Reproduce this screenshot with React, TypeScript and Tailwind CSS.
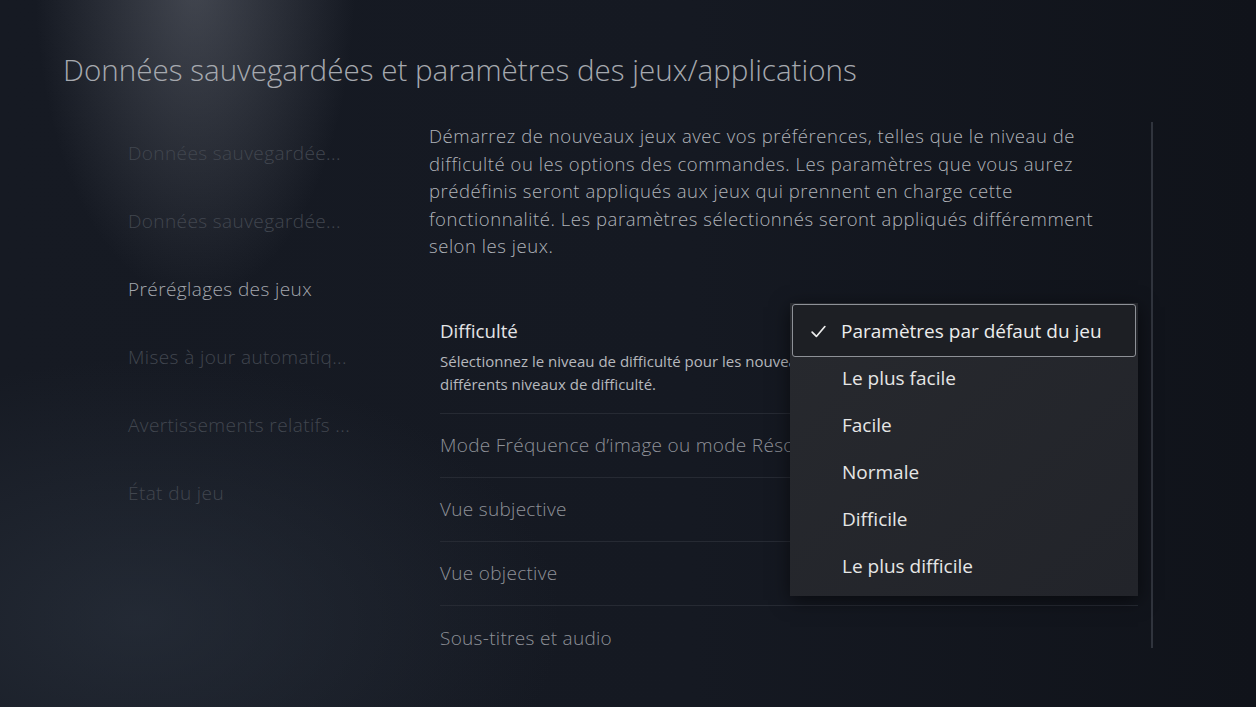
import React from 'react';

const navItems = [
  { label: 'Données sauvegardée...', active: false },
  { label: 'Données sauvegardée...', active: false },
  { label: 'Préréglages des jeux', active: true },
  { label: 'Mises à jour automatiq...', active: false },
  { label: 'Avertissements relatifs ...', active: false },
  { label: 'État du jeu', active: false },
];

const settingRows = [
  'Mode Fréquence d’image ou mode Résolution',
  'Vue subjective',
  'Vue objective',
  'Sous-titres et audio',
];

const options = ['Le plus facile', 'Facile', 'Normale', 'Difficile', 'Le plus difficile'];

const CheckIcon: React.FC = () => (
  <svg className="h-[17px] w-[17px]" viewBox="0 0 24 24" fill="none" stroke="currentColor" strokeWidth={2.4} strokeLinecap="round" strokeLinejoin="round">
    <path d="M3 13l6 6L21 5" />
  </svg>
);

const DifficultyDropdown: React.FC = () => (
  <div className="absolute left-[350px] top-[3px] w-[348px] h-[293px] bg-[#25272c] bg-gradient-to-br from-[#27292e] to-[#22242a] shadow-[0_4px_18px_rgba(0,0,0,0.55)] p-[2px] pt-px">
    {/* selected option */}
    <div className="flex items-center h-[53px] pt-[2px] rounded-[3px] border-[1.5px] border-[#8e9197] bg-[#1d1f24] text-[#ececec]">
      <span className="w-[48px] flex justify-end pr-[14px]">
        <CheckIcon />
      </span>
      <span className="text-[19px]">Paramètres par défaut du jeu</span>
    </div>
    <div className="-mt-[2px]">
      {options.map((o) => (
        <div key={o} className="flex items-center h-[47px] pl-[50px] text-[19px] text-[#e6e6e6]">
          {o}
        </div>
      ))}
    </div>
  </div>
);

const App: React.FC = () => {
  return (
    <div
      className="relative h-[707px] w-full overflow-hidden bg-[#141821] bg-[radial-gradient(ellipse_160px_320px_at_195px_-20px,rgba(120,124,134,0.45),transparent),radial-gradient(ellipse_420px_260px_at_140px_620px,rgba(44,52,64,0.6),transparent),linear-gradient(90deg,#161a23_0%,#151922_55%,#10131a_100%)]"
      style={{ fontFamily: '"Open Sans", "Noto Sans", sans-serif' }}
    >
      <div className="pt-[50px] pl-[63px]">
        <h1 className="h-[40px] leading-[40px] text-[29.6px] font-light text-[#a6a9af]">
          Données sauvegardées et paramètres des jeux/applications
        </h1>
      </div>

      <div className="flex mt-[29px]">
        {/* left navigation */}
        <div className="w-[429px] pl-[128px] shrink-0">
          {navItems.map((item, i) => (
            <div
              key={i}
              className={`h-[68px] flex items-center text-[19px] tracking-[0.4px] font-light whitespace-nowrap ${
                item.active ? 'text-[#a3a6ad]' : 'text-[#41464f]'
              }`}
            >
              {item.label}
            </div>
          ))}
        </div>

        {/* content */}
        <div className="w-[709px] shrink-0">
          <p className="text-[18.5px] tracking-[0.55px] leading-[27.5px] font-light text-[#b0b3b9] pt-[3px] whitespace-nowrap">
            Démarrez de nouveaux jeux avec vos préférences, telles que le niveau de
            <br />
            difficulté ou les options des commandes. Les paramètres que vous aurez
            <br />
            prédéfinis seront appliqués aux jeux qui prennent en charge cette
            <br />
            fonctionnalité. Les paramètres sélectionnés seront appliqués différemment
            <br />
            selon les jeux.
          </p>

          <div className="relative ml-[11px] mt-[40px] w-[698px]">
            <div className="pt-[18px] pb-[17px] border-b border-[#262a33]">
              <div className="text-[18.7px] leading-[26px] text-[#e4e4e6]">Difficulté</div>
              <div className="mt-[6px] text-[15px] leading-[23px] text-[#b6b8bd] whitespace-nowrap overflow-hidden">
                Sélectionnez le niveau de difficulté pour les nouveaux jeux qui prennent en charge
                <br />
                différents niveaux de difficulté.
              </div>
            </div>
            {settingRows.map((r, i) => (
              <div
                key={r}
                className={`h-[64px] pt-px flex items-center text-[19px] tracking-[0.3px] font-light text-[#8e9198] whitespace-nowrap ${
                  i < settingRows.length - 1 ? 'border-b border-[#262a33]' : ''
                }`}
              >
                {r}
              </div>
            ))}

            <DifficultyDropdown />
          </div>
        </div>

        {/* scroll rail */}
        <div className="ml-[13px] mt-[3px] w-[2px] h-[526px] bg-[#30343d]" />
      </div>
    </div>
  );
};

export default App;
